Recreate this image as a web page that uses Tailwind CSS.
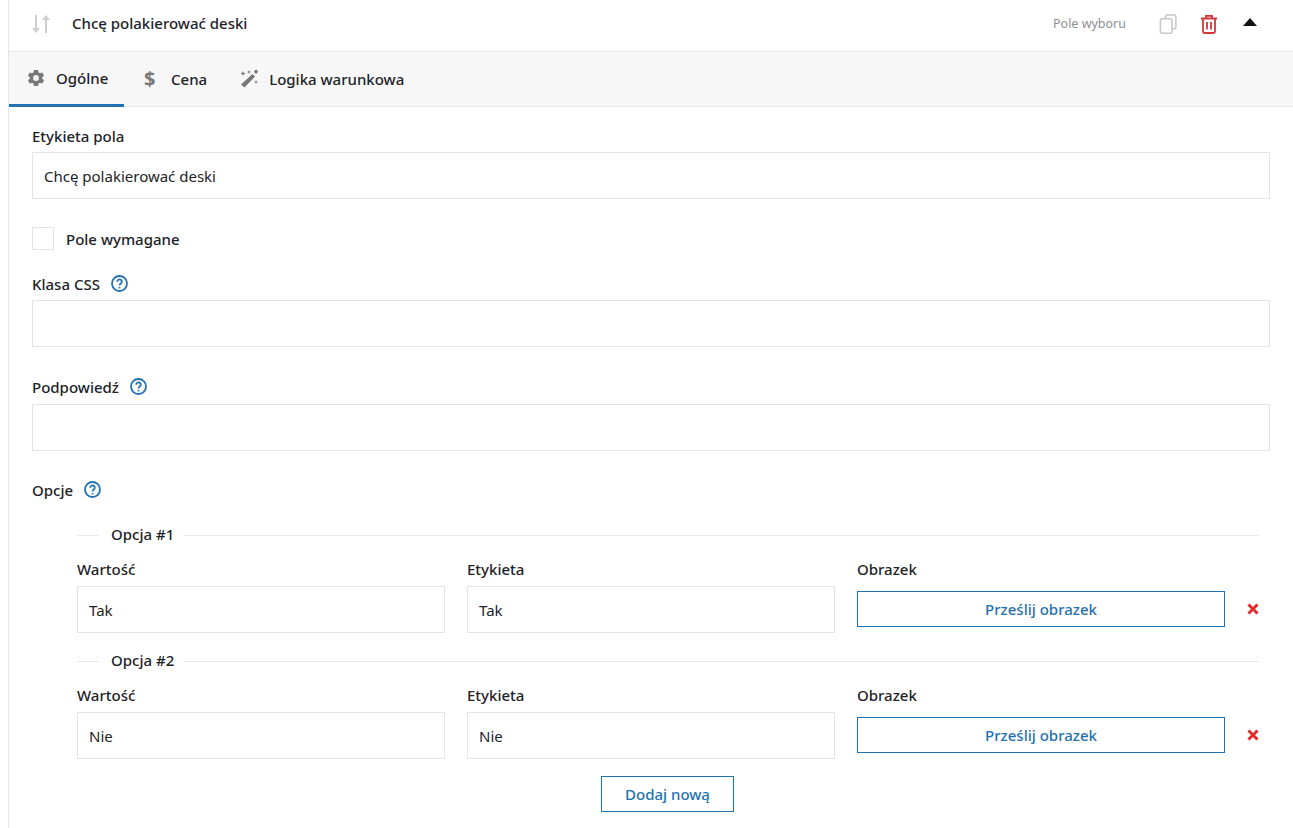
<!DOCTYPE html>
<html>
<head>
<meta charset="UTF-8">
<script src="https://cdn.jsdelivr.net/npm/@tailwindcss/browser@4"></script>
</head>
<body class="bg-white overflow-hidden font-['Noto_Sans','Open_Sans',sans-serif] text-[#1d2327]">
<div class="ml-2 h-[828px] w-[1285px] border-l border-[#e5e5e5]">
  <!-- header -->
  <div class="flex items-center h-[52px] pb-1 border-b border-[#ececec] pl-[22px] pr-[36px]">
    <svg class="w-5 h-5 text-[#cfcfcf]" viewBox="0 0 20 20" fill="currentColor"><path d="M4 1h2v13h3l-4 5-4-5h3zM14 19h2V6h3l-4-5-4 5h3z"/></svg>
    <span class="ml-[21px] text-[15px] font-medium">Chcę polakierować deski</span>
    <span class="ml-auto mr-[-1px] pt-0.5 text-[12.5px] text-[#8c8f94]">Pole wyboru</span>
    <svg class="ml-[33px] w-5 h-5 text-[#c8c8c8]" viewBox="1.500 0.500 17 19" fill="none" stroke="currentColor" stroke-width="1.500"><path d="M7 4.500 8.500 1.500H16a1.500 1.500 0 0 1 1.500 1.500v10a1.500 1.500 0 0 1-1.500 1.500h-1.500"/><rect x="2.800" y="5" width="11" height="13.800" rx="1.500"/></svg>
    <svg class="ml-[21px] w-5 h-5 text-[#d63638]" viewBox="0 0 20 20" fill="none" stroke="currentColor" stroke-width="1.800"><path d="M2 4.500h16M7 4V1.800h6V4M4 4.500v13a1.500 1.500 0 0 0 1.500 1.500h9a1.500 1.500 0 0 0 1.500-1.500v-13M8 8v7.500M12 8v7.500"/></svg>
    <svg class="ml-6 -mt-1 w-[14px] h-2 text-[#111]" viewBox="0 0 14 8" fill="currentColor"><path d="M7 0l7 8H0z"/></svg>
  </div>
  <!-- tabs -->
  <div class="flex h-[55px] bg-[#f7f7f7] border-b border-[#e8e8e8] text-[15px] font-medium">
    <div class="flex items-center gap-[10px] w-[115px] pl-[17px] border-b-[3px] border-[#2271b1] h-[55px]">
      <svg class="w-5 h-5 text-[#777]" viewBox="0 0 24 24" fill="currentColor"><path d="M19.400 13a7.500 7.500 0 0 0 0-2l2.300-1.800-2.300-3.900-2.700 1.100a7.500 7.500 0 0 0-1.700-1L14.600 2.500h-5.200L9 5.400a7.500 7.500 0 0 0-1.700 1L4.600 5.300 2.300 9.200 4.600 11a7.500 7.500 0 0 0 0 2l-2.300 1.800 2.300 3.900 2.700-1.100a7.500 7.500 0 0 0 1.700 1l.4 2.900h5.200l.4-2.900a7.500 7.500 0 0 0 1.700-1l2.700 1.100 2.300-3.900zM12 15.500a3.500 3.500 0 1 1 0-7 3.500 3.500 0 0 1 0 7z"/></svg>
      <span>Ogólne</span>
    </div>
    <div class="flex items-center ml-5 gap-4">
      <span class="w-[11px] text-xl font-bold text-[#777] leading-none">$</span>
      <span>Cena</span>
    </div>
    <div class="flex items-center ml-8 gap-[10px]">
      <svg class="w-5 h-5 text-[#777]" viewBox="0 0 20 20" fill="currentColor"><path d="M13.500 5 16 7.500 5.500 18.500 2 15.500zM4 2l.8 1.700L6.500 4.500l-1.700.8L4 7l-.8-1.700L1.500 4.500l1.700-.8zM10 1l.6 1.400L12 3l-1.400.6L10 5l-.6-1.400L8 3l1.400-.6zM17 11l.6 1.400L19 13l-1.400.6L17 15l-.6-1.400L15 13l1.400-.6zM16 1h2l1 2-2 2-2-2z"/></svg>
      <span>Logika warunkowa</span>
    </div>
  </div>
  <!-- form -->
  <div class="pl-[23px] pr-[15px] text-[15px]">
    <label class="block mt-[19px] leading-[20px] font-medium">Etykieta pola</label>
    <input value="Chcę polakierować deski" class="block mt-[6px] w-[1238px] h-[47px] px-[11px] border border-[#e2e4e7] outline-none">

    <div class="flex items-center mt-7 h-[23px]">
      <span class="w-[22px] h-[23px] border border-[#e2e4e7]"></span>
      <span class="ml-3 pt-0.5 font-medium">Pole wymagane</span>
    </div>

    <div class="flex items-center gap-[11px] mt-6 h-5 font-medium">
      Klasa CSS
      <svg class="-mt-0.5 w-[17px] h-[17px] text-[#2271b1]" viewBox="0 0 17 17" fill="none" stroke="currentColor" stroke-width="1.800"><circle cx="8.500" cy="8.500" r="7.500"/><path d="M6.200 6.700a2.300 2.300 0 1 1 3.600 1.900c-.9.600-1.300 1-1.300 2"/><path d="M8.500 12v1.400"/></svg>
    </div>
    <input class="block mt-[6px] w-[1238px] h-[47px] px-[11px] border border-[#e2e4e7] outline-none">

    <div class="flex items-center gap-[11px] mt-[30px] h-5 font-medium">
      Podpowiedź
      <svg class="-mt-0.5 w-[17px] h-[17px] text-[#2271b1]" viewBox="0 0 17 17" fill="none" stroke="currentColor" stroke-width="1.800"><circle cx="8.500" cy="8.500" r="7.500"/><path d="M6.200 6.700a2.300 2.300 0 1 1 3.600 1.900c-.9.600-1.300 1-1.300 2"/><path d="M8.500 12v1.400"/></svg>
    </div>
    <input class="block mt-[7px] w-[1238px] h-[47px] px-[11px] border border-[#e2e4e7] outline-none">

    <div class="flex items-center gap-[11px] mt-[29px] h-5 font-medium">
      Opcje
      <svg class="-mt-0.5 w-[17px] h-[17px] text-[#2271b1]" viewBox="0 0 17 17" fill="none" stroke="currentColor" stroke-width="1.800"><circle cx="8.500" cy="8.500" r="7.500"/><path d="M6.200 6.700a2.300 2.300 0 1 1 3.600 1.900c-.9.600-1.300 1-1.300 2"/><path d="M8.500 12v1.400"/></svg>
    </div>

    <div class="ml-[45px] w-[1182px] font-medium">
      <!-- option 1 -->
      <div class="flex items-center mt-[25px] h-5">
        <span class="w-[22px] h-px bg-[#e8e8e8]"></span>
        <span class="pl-3 pr-[9px] -mt-0.5">Opcja #1</span>
        <span class="flex-1 h-px bg-[#e8e8e8]"></span>
      </div>
      <div class="flex mt-[14px]">
        <div class="w-[368px]">
          <div class="leading-5">Wartość</div>
          <input value="Tak" class="block mt-[7px] w-full h-[47px] px-[11px] border border-[#e2e4e7] outline-none font-normal">
        </div>
        <div class="w-[368px] ml-[22px]">
          <div class="leading-5">Etykieta</div>
          <input value="Tak" class="block mt-[7px] w-full h-[47px] px-[11px] border border-[#e2e4e7] outline-none font-normal">
        </div>
        <div class="w-[368px] ml-[22px]">
          <div class="leading-5">Obrazek</div>
          <button class="block mt-3 w-full h-9 border border-[#2271b1] text-[#2271b1] font-medium">Prześlij obrazek</button>
        </div>
        <svg class="ml-[22px] mt-[44px] w-3 h-3 text-[#e02b2b]" viewBox="0 0 12 12" fill="none" stroke="currentColor" stroke-width="3"><path d="M1.500 1.500l9 9M10.500 1.500l-9 9"/></svg>
      </div>
      <!-- option 2 -->
      <div class="flex items-center mt-[18px] h-5">
        <span class="w-[22px] h-px bg-[#e8e8e8]"></span>
        <span class="pl-3 pr-[9px] -mt-0.5">Opcja #2</span>
        <span class="flex-1 h-px bg-[#e8e8e8]"></span>
      </div>
      <div class="flex mt-[14px]">
        <div class="w-[368px]">
          <div class="leading-5">Wartość</div>
          <input value="Nie" class="block mt-[7px] w-full h-[47px] px-[11px] border border-[#e2e4e7] outline-none font-normal">
        </div>
        <div class="w-[368px] ml-[22px]">
          <div class="leading-5">Etykieta</div>
          <input value="Nie" class="block mt-[7px] w-full h-[47px] px-[11px] border border-[#e2e4e7] outline-none font-normal">
        </div>
        <div class="w-[368px] ml-[22px]">
          <div class="leading-5">Obrazek</div>
          <button class="block mt-3 w-full h-9 border border-[#2271b1] text-[#2271b1] font-medium">Prześlij obrazek</button>
        </div>
        <svg class="ml-[22px] mt-[44px] w-3 h-3 text-[#e02b2b]" viewBox="0 0 12 12" fill="none" stroke="currentColor" stroke-width="3"><path d="M1.500 1.500l9 9M10.500 1.500l-9 9"/></svg>
      </div>
      <button class="block mt-[17px] ml-[524px] w-[133px] h-9 border border-[#2271b1] text-[#2271b1] font-medium">Dodaj nową</button>
    </div>
  </div>
</div>
</body>
</html>
